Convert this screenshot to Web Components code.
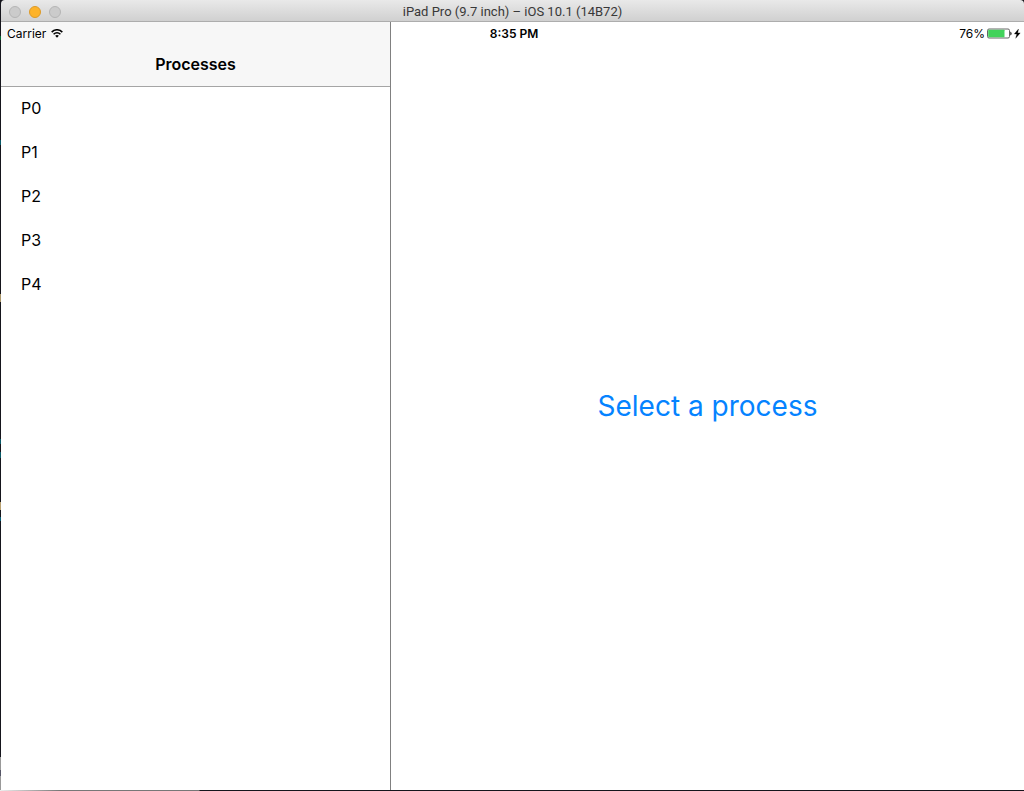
<!DOCTYPE html>
<html lang="en">
<head>
<meta charset="utf-8">
<title>iPad Pro (9.7 inch) – iOS 10.1 (14B72)</title>
<style>
html, body { height: 100%; margin: 0; }
body { font-family: Inter, "Liberation Sans", sans-serif; color: #000; background: #15151c; }
</style>
</head>
<body>
<simulator-window>
  <title-bar slot="title">iPad Pro (9.7 inch) – iOS 10.1 (14B72)</title-bar>
  <status-bar slot="status" carrier="Carrier" time="8:35 PM" battery="76"></status-bar>
  <process-list heading="Processes" items="P0,P1,P2,P3,P4"></process-list>
  <detail-pane>Select a process</detail-pane>
</simulator-window>
<script>
class Base extends HTMLElement {
  connectedCallback() {
    if (!this.shadowRoot) this.attachShadow({ mode: "open" }).innerHTML = this.render();
  }
}

customElements.define("simulator-window", class extends Base {
  render() {
    return `<style>
      :host { display: flex; flex-direction: column; box-sizing: border-box; min-height: 100vh; padding: 0 0 1px 1px;
        background:
          linear-gradient(90deg, #eee, #777 60px, #777 199px, #15151c 200px) bottom / 100% 1px no-repeat,
          linear-gradient(#15151c 36px, #063 36px 40px, #15151c 40px 140px, #075866 140px 145px, #15151c 145px 294px, #a89468 294px 302px,
            #15151c 302px 439px, #075866 439px 444px, #15151c 444px 452px, #075866 452px 458px, #15151c 458px 502px, #b8a070 502px 510px,
            #15151c 510px 517px, #086079 517px 521px, #15151c 521px 757px, #999 757px 770px, #556 770px 776px, #999 776px) left / 1px 100% no-repeat,
          #15151c; }
      .screen { position: relative; flex: 1; display: grid; grid-template-columns: 390px 1fr; background: #fff; }
      .status { position: absolute; inset: 0 0 auto 0; }
    </style>
    <slot name="title"></slot>
    <main class="screen"><slot></slot><div class="status"><slot name="status"></slot></div></main>`;
  }
});

customElements.define("title-bar", class extends Base {
  render() {
    return `<style>
      :host { display: grid; grid-template-columns: 1fr auto 1fr; align-items: center; box-sizing: border-box; height: 22px;
        padding: 0 8px; background: linear-gradient(#e9e9e9, #d0d0d0); border-bottom: 1px solid #adadad;
        border-radius: 4px 4px 0 0; font: 13px/22px Roboto, sans-serif; color: #383838; }
      .lights { display: flex; gap: 8px; }
      button { box-sizing: border-box; width: 12px; height: 12px; padding: 0; border: 1px solid #b5b5b5; border-radius: 50%; background: #cbcbcb; }
      .min { background: #fdb32a; border-color: #dc9a28; }
      .name { padding-top: 1px; }
    </style>
    <div class="lights"><button aria-label="Close"></button><button class="min" aria-label="Minimize"></button><button aria-label="Zoom"></button></div>
    <span class="name"><slot></slot></span>`;
  }
});

customElements.define("status-bar", class extends Base {
  render() {
    const at = n => this.getAttribute(n);
    return `<style>
      :host { display: grid; grid-template-columns: 1fr auto 1fr; align-items: center; height: 20px; padding: 0 3px 0 6px; font-size: 12px; line-height: 20px; }
      .side { display: flex; align-items: center; gap: 5px; }
      .end { justify-content: flex-end; gap: 2px; }
      .text { padding-top: 2px; }
      b { font-weight: 600; }
      svg { display: block; }
    </style>
    <span class="side"><span class="text">${at("carrier")}</span>
      <svg width="12" height="9" viewBox="0 0 13 10" fill="none" stroke="#000" stroke-width="1.700" role="img" aria-label="Wi-Fi">
        <path d="M.6 3.500C4-.1 9-.1 12.400 3.500M2.700 5.800C5 3.500 8 3.500 10.300 5.800"/>
        <path d="M6.500 9.800L4.400 7.500Q6.500 5.800 8.600 7.500Z" fill="#000" stroke="none"/></svg></span>
    <b class="text">${at("time")}</b>
    <span class="side end"><span class="text">${at("battery")}%</span>
      <svg width="34" height="11" viewBox="0 0 34 11" role="img" aria-label="Charging">
        <rect x=".5" y="1" width="22" height="9" rx="1.500" fill="#fff" stroke="#555" stroke-width=".9"/>
        <rect x="1.200" y="1.700" width="16.300" height="7.600" rx=".6" fill="#42d35b"/>
        <path d="M23.300 3.400Q26 5.500 23.300 7.600Z" fill="#111"/>
        <path d="M31.500 1L27.300 6H29.800L28.700 10.300L33.200 4.900H30.700Z" fill="#000" stroke="#000" stroke-width=".3"/></svg></span>`;
  }
});

customElements.define("process-list", class extends Base {
  render() {
    const rows = this.getAttribute("items").split(",").map(t => `<li>${t}</li>`).join("");
    return `<style>
      :host { display: block; box-sizing: border-box; border-right: 1px solid #808080; }
      header { display: flex; justify-content: center; padding-top: 20px; background: #f7f7f7; border-bottom: 1px solid #a5a5a5; }
      h1 { margin: 0; font-size: 16px; line-height: 44px; font-weight: 600; }
      ul { list-style: none; margin: 0; padding: 0; }
      li { padding-left: 20px; font-size: 16px; line-height: 42px; height: 44px; }
    </style>
    <header><h1>${this.getAttribute("heading")}</h1></header><ul>${rows}</ul>`;
  }
});

customElements.define("detail-pane", class extends Base {
  render() {
    return `<style>
      :host { display: flex; align-items: center; justify-content: center; color: #0583ff; font-size: 28px; line-height: 36px; }
    </style><span><slot></slot></span>`;
  }
});
</script>
</body>
</html>
